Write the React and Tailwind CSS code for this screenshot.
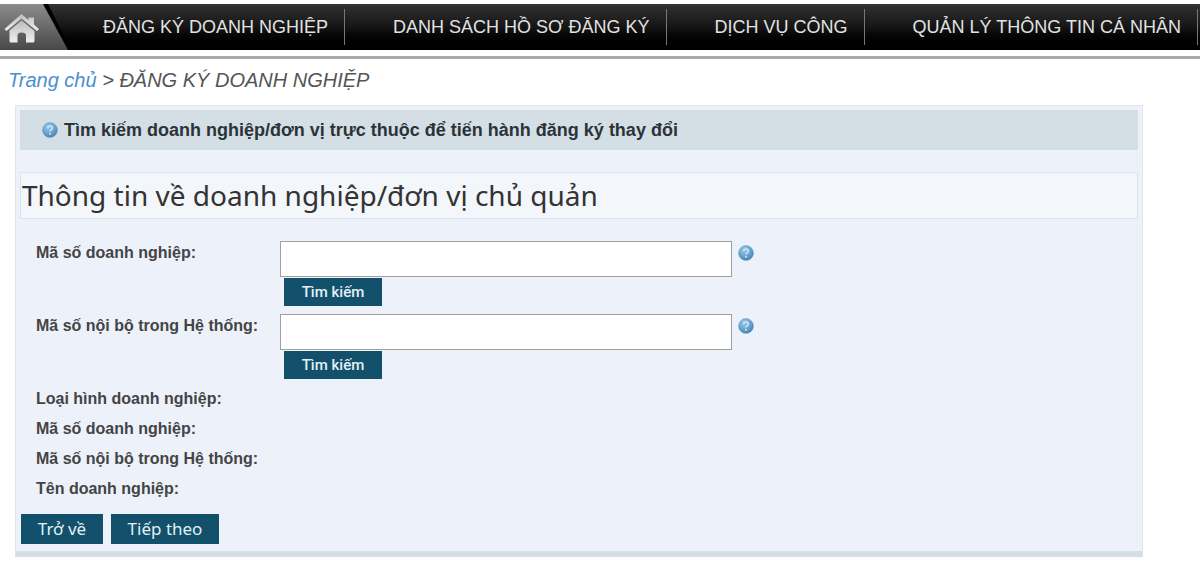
import React, { useState } from "react";

const NAV_ITEMS = [
  "ĐĂNG KÝ DOANH NGHIỆP",
  "DANH SÁCH HỒ SƠ ĐĂNG KÝ",
  "DỊCH VỤ CÔNG",
  "QUẢN LÝ THÔNG TIN CÁ NHÂN",
];

const DETAILS = [
  "Loại hình doanh nghiệp:",
  "Mã số doanh nghiệp:",
  "Mã số nội bộ trong Hệ thống:",
  "Tên doanh nghiệp:",
];

const HomeIcon = () => (
  <svg viewBox="0 0 69 46" className="block h-full w-full" aria-hidden="true">
    <defs>
      <linearGradient id="tab" x1="0" y1="0" x2="0" y2="1">
        <stop offset="0" stopColor="#8c8c8c" />
        <stop offset="1" stopColor="#484848" />
      </linearGradient>
      <linearGradient id="house" x1="0" y1="0" x2="0" y2="1">
        <stop offset="0" stopColor="#bdbdbd" />
        <stop offset="1" stopColor="#efefef" />
      </linearGradient>
    </defs>
    <path d="M42 0 H48 L69 42 V46 H66 Z" fill="#000" />
    <path d="M0 0 H43 L68 46 H0 Z" fill="url(#tab)" />
    {/* roof */}
    <path
      d="M21.5 10 L28.5 16 V13.5 H34 V20.5 L39 25 L37 27 L21.5 14.5 L6.5 27 L4.5 25 Z"
      fill="url(#house)"
    />
    {/* walls */}
    <path
      d="M21.5 16.5 L34.5 27 V37 Q34.5 38.5 33 38.5 H26 V31.5 Q26 28.5 21.5 28.5 Q17.5 28.5 17.5 31.5 V38.5 H11 Q9.5 38.5 9.5 37 V26.5 Z"
      fill="url(#house)"
    />
  </svg>
);

const HelpIcon = ({ className = "" }) => (
  <svg viewBox="0 0 16 16" className={`size-4 shrink-0 ${className}`} aria-hidden="true">
    <defs>
      <radialGradient id="ball" cx="0.4" cy="0.3" r="0.8">
        <stop offset="0" stopColor="#9cc8e6" />
        <stop offset="0.5" stopColor="#6aa6d0" />
        <stop offset="1" stopColor="#3d7aa6" />
      </radialGradient>
    </defs>
    <circle cx="8" cy="8" r="7.5" fill="url(#ball)" stroke="#6f9dbd" strokeWidth="0.5" />
    <path
      d="M5.6 6.2 Q5.7 4 8 4 Q10.4 4 10.4 6 Q10.4 7.2 9.1 7.9 Q8 8.5 8 9.6"
      fill="none"
      stroke="#cfe6f5"
      strokeWidth="1.5"
    />
    <circle cx="8" cy="11.7" r="1" fill="#cfe6f5" />
  </svg>
);

const SearchField = ({ id, label, value, onChange }) => (
  <div className="flex items-start">
    <label htmlFor={id} className="w-[244px] shrink-0 pt-0.5 leading-5">
      {label}
    </label>
    <div>
      <div className="flex items-start gap-1.5">
        <input
          id={id}
          type="text"
          value={value}
          onChange={(e) => onChange(e.target.value)}
          className="h-9 w-[452px] border border-[#a0a0a0] bg-white px-2 font-normal outline-none"
        />
        <HelpIcon className="mt-1" />
      </div>
      <button
        type="button"
        className="mt-px ml-1 block h-7 w-[98px] bg-[#12506b] font-['Roboto',sans-serif] text-[15px] font-medium text-[#e4f0f5]"
      >
        Tìm kiếm
      </button>
    </div>
  </div>
);

const App = () => {
  const [taxCode, setTaxCode] = useState("");
  const [internalCode, setInternalCode] = useState("");

  return (
    <div className="min-h-screen bg-white pt-1 font-['Liberation_Sans',Arial,sans-serif]">
      <nav className="flex h-[46px] bg-linear-to-b from-[#333333] via-[#151515] to-black">
        <a href="#home" aria-label="Trang chủ" className="-mr-3.5 w-[69px] shrink-0">
          <HomeIcon />
        </a>
        <ul className="flex items-center">
          {NAV_ITEMS.map((item) => (
            <li key={item} className="h-9 border-r border-[#777777] pr-4 pl-12">
              <a href="#nav" className="text-lg leading-9 whitespace-nowrap text-[#e2e2e2]">
                {item}
              </a>
            </li>
          ))}
        </ul>
      </nav>
      <div className="mt-1.5 h-[3px] bg-[#a8a8a8]" />

      {/* Breadcrumb */}
      <div className="mt-[7px] pl-2 text-xl leading-7 text-[#555555] italic">
        <a href="#home" className="text-[#4a90cf]">
          Trang chủ
        </a>{" "}
        &gt; ĐĂNG KÝ DOANH NGHIỆP
      </div>

      <main className="mt-[11px] mr-[57px] ml-[15px] border border-b-[6px] border-[#dfe7ed] border-b-[#d5dfe5] bg-[#edf2fa] px-1 pt-1 text-base font-bold text-[#444444]">
        <div className="flex h-10 items-center gap-1.5 bg-[#d3dfe5] pl-[22px] text-lg text-[#2c3338]">
          <HelpIcon />
          Tìm kiếm doanh nghiệp/đơn vị trực thuộc để tiến hành đăng ký thay đổi
        </div>

        <h1 className="mt-[22px] border border-[#dae4ec] bg-[#f3f6fb] pl-px font-['Noto_Sans',sans-serif] text-[28px] leading-[45px] font-normal text-[#333333]">
          Thông tin về doanh nghiệp/đơn vị chủ quản
        </h1>

        <form className="mt-[22px]" onSubmit={(e) => e.preventDefault()}>
          <div className="space-y-2 pl-4">
            <SearchField
              id="tax-code"
              label="Mã số doanh nghiệp:"
              value={taxCode}
              onChange={setTaxCode}
            />
            <SearchField
              id="internal-code"
              label="Mã số nội bộ trong Hệ thống:"
              value={internalCode}
              onChange={setInternalCode}
            />
          </div>

          <dl className="mt-[5px] pl-4 leading-[30px]">
            {DETAILS.map((label) => (
              <div key={label} className="flex">
                <dt className="w-[244px]">{label}</dt>
                <dd />
              </div>
            ))}
          </dl>

          <div className="mt-2.5 mb-[7px] flex gap-2 pl-px font-['Noto_Sans',sans-serif] text-[17px] font-normal text-[#e4f0f5]">
            <button type="button" className="h-[30px] w-[82px] bg-[#12506b]">
              Trở về
            </button>
            <button type="submit" className="h-[30px] w-[108px] bg-[#12506b]">
              Tiếp theo
            </button>
          </div>
        </form>
      </main>
    </div>
  );
};

export default App;
